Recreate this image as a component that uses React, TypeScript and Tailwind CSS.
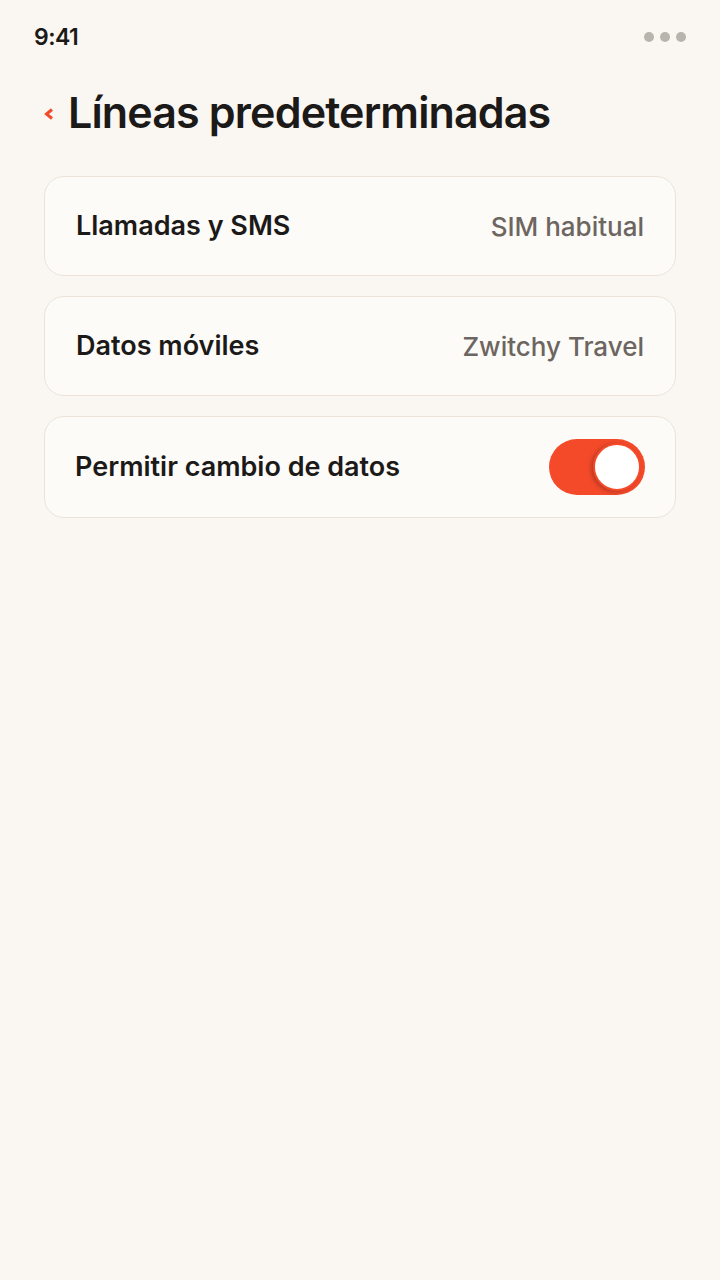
export default function App() {
  const rows = [
    { label: "Llamadas y SMS", value: "SIM habitual" },
    { label: "Datos móviles", value: "Zwitchy Travel" },
  ];

  return (
    <div
      className="min-h-[1280px] w-[720px] bg-[#faf7f3] text-[#1c1a18]"
      style={{ fontFamily: "Inter, 'Noto Sans', sans-serif" }}
    >
      {/* status bar */}
      <div className="flex h-[74px] items-center justify-between pl-[34px] pr-[34px]">
        <span className="text-[23px] font-semibold tracking-tight">9:41</span>
        <div className="flex items-center gap-[6px]">
          <span className="h-[10px] w-[10px] rounded-full bg-[#bab4ae]" />
          <span className="h-[10px] w-[10px] rounded-full bg-[#bab4ae]" />
          <span className="h-[10px] w-[10px] rounded-full bg-[#bab4ae]" />
        </div>
      </div>

      {/* header */}
      <div className="flex h-[76px] items-center gap-[14px] px-[44px]">
        <svg width="10" height="12" viewBox="0 0 10 12" className="mt-[3px]">
          <path
            d="M8 1.5 L2.5 6 L8 10.5"
            fill="none"
            stroke="#f2492b"
            strokeWidth="3"
            strokeLinejoin="miter"
          />
        </svg>
        <h1 className="text-[43px] font-semibold tracking-[-0.02em]">
          Líneas predeterminadas
        </h1>
      </div>

      <div className="mt-[26px] flex flex-col gap-[20px] px-[44px]">
        {rows.map((r) => (
          <div
            key={r.label}
            className="flex h-[100px] items-center justify-between rounded-[20px] border border-[#ebe3da] bg-[#fcfbf8] px-[31px]"
          >
            <span className="text-[27px] font-semibold">{r.label}</span>
            <span className="text-[26px] font-medium text-[#6d6560]">
              {r.value}
            </span>
          </div>
        ))}

        <div className="flex h-[102px] items-center justify-between rounded-[20px] border border-[#ebe3da] bg-[#fcfbf8] px-[30px]">
          <span className="text-[27px] font-semibold">
            Permitir cambio de datos
          </span>
          <div className="flex h-[56px] w-[96px] items-center justify-end rounded-full bg-[#f44a2a] p-[4px]">
            <span className="h-[48px] w-[48px] rounded-full border-2 border-[#f44a2a] bg-white shadow-[-2px_1px_4px_rgba(0,0,0,0.25)]" />
          </div>
        </div>
      </div>
    </div>
  );
}
